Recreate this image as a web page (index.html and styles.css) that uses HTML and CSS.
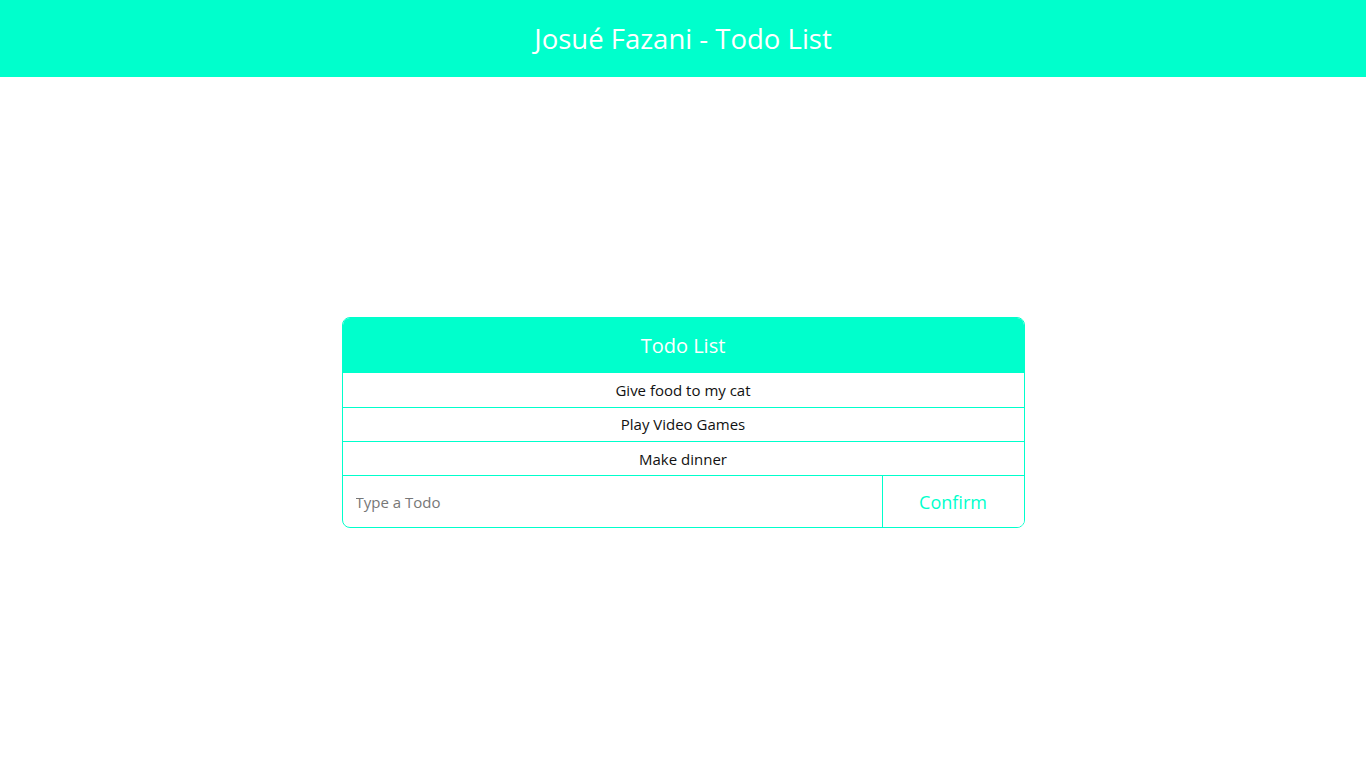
FILE: index.html
```html
<!DOCTYPE html>
<html lang="en">
<head>
<meta charset="utf-8">
<title>Todo List</title>
<link rel="stylesheet" href="styles.css">
</head>
<body>
<header class="topbar">
  <h1 class="topbar-title">Josué Fazani - Todo List</h1>
</header>
<main class="main">
  <section class="card">
    <div class="card-header">Todo List</div>
    <ul class="todo-list">
      <li class="todo-item">Give food to my cat</li>
      <li class="todo-item">Play Video Games</li>
      <li class="todo-item">Make dinner</li>
    </ul>
    <form class="todo-form">
      <input class="todo-input" type="text" placeholder="Type a Todo">
      <button class="todo-button" type="button">Confirm</button>
    </form>
  </section>
</main>
</body>
</html>
```
FILE: styles.css
```css
* { box-sizing: border-box; }
html, body { margin: 0; padding: 0; }
body {
  font-family: "Open Sans", "Noto Sans", sans-serif;
  min-height: 100vh;
  display: flex;
  flex-direction: column;
  background: #fff;
}
.topbar {
  height: 77px;
  background: #00ffcc;
  display: flex;
  align-items: center;
  justify-content: center;
}
.topbar-title {
  margin: 0;
  color: #fff;
  font-weight: 400;
  font-size: 27.5px;
  padding-bottom: 1px;
}
.main {
  flex: 1;
  display: flex;
  align-items: center;
  justify-content: center;
}
.card {
  width: 683px;
  border: 1px solid #00ffcc;
  border-radius: 8px;
  overflow: hidden;
}
.card-header {
  height: 55px;
  background: #00ffcc;
  color: #fff;
  font-size: 20px;
  display: flex;
  align-items: center;
  justify-content: center;
}
.todo-list {
  list-style: none;
  margin: 0;
  padding: 0;
}
.todo-item {
  height: 34px;
  border-bottom: 1px solid #00ffcc;
  display: flex;
  align-items: center;
  justify-content: center;
  font-size: 15px;
  color: #111;
  padding-bottom: 1px;
}
.todo-item:first-child { height: 35px; }
.todo-item:last-child { padding-bottom: 0; }
.todo-form {
  display: flex;
  height: 51px;
  margin: 0;
}
.todo-input {
  flex: 1;
  border: none;
  outline: none;
  padding: 0 13px;
  font-family: inherit;
  font-size: 15px;
  color: #333;
  background: transparent;
}
.todo-input::placeholder { color: #777; }
.todo-button {
  width: 142px;
  border: none;
  border-left: 1px solid #00ffcc;
  background: #fff;
  color: #00ffcc;
  font-family: inherit;
  font-size: 18px;
  padding: 0;
  cursor: pointer;
}
```
